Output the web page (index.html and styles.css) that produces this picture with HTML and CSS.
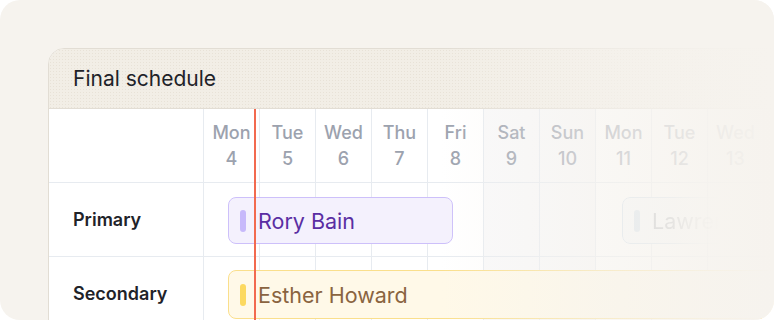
FILE: index.html
```html
<!DOCTYPE html>
<html lang="en">
  <head>
    <title>Final schedule</title>
    <link rel="stylesheet" href="styles.css">
  </head>

  <body>
    <div class="frame">
      <div class="card">
        <div class="card-head">Final schedule</div>
        <div class="table">
          <div class="row head-row">
            <div class="cells">
              <div class="cell label"></div>
              <div class="cell day"><span>Mon</span><span>4</span></div>
              <div class="cell day"><span>Tue</span><span>5</span></div>
              <div class="cell day"><span>Wed</span><span>6</span></div>
              <div class="cell day"><span>Thu</span><span>7</span></div>
              <div class="cell day"><span>Fri</span><span>8</span></div>
              <div class="cell day weekend"><span>Sat</span><span>9</span></div>
              <div class="cell day weekend"><span>Sun</span><span>10</span></div>
              <div class="cell day"><span>Mon</span><span>11</span></div>
              <div class="cell day"><span>Tue</span><span>12</span></div>
              <div class="cell day"><span>Wed</span><span>13</span></div>
              <div class="cell day"></div>
            </div>
          </div>

          <div class="row">
            <div class="cells">
              <div class="cell label">Primary</div>
              <div class="cell"></div>
              <div class="cell"></div>
              <div class="cell"></div>
              <div class="cell"></div>
              <div class="cell"></div>
              <div class="cell weekend"></div>
              <div class="cell weekend"></div>
              <div class="cell"></div>
              <div class="cell"></div>
              <div class="cell"></div>
              <div class="cell"></div>
            </div>
            <div class="event purple rory"><i></i>Rory Bain</div>
            <div class="event blue lawrence"><i></i>Lawrence</div>
          </div>

          <div class="row">
            <div class="cells">
              <div class="cell label">Secondary</div>
              <div class="cell"></div>
              <div class="cell"></div>
              <div class="cell"></div>
              <div class="cell"></div>
              <div class="cell"></div>
              <div class="cell weekend"></div>
              <div class="cell weekend"></div>
              <div class="cell"></div>
              <div class="cell"></div>
              <div class="cell"></div>
              <div class="cell"></div>
            </div>
            <div class="event yellow esther"><i></i>Esther Howard</div>
          </div>

          <div class="now-line"></div>
        </div>
      </div>
      <div class="fade"></div>
    </div>
  </body>
</html>
```

FILE: styles.css
```css
body {
  margin: 0;
  background-color: white;
  font-family: Inter, "Noto Sans", sans-serif;
}

.frame {
  position: relative;
  width: 774px;
  height: 320px;
  box-sizing: border-box;
  padding: 48px 0 0 48px;
  background-color: #f6f3ee;
  border-radius: 20px;
  overflow: hidden;
}

.card {
  width: 820px;
  background-color: white;
  border: 1px solid #e2ddd4;
  border-radius: 16px 16px 0 0;
  overflow: hidden;
}

.card-head {
  height: 59px;
  display: flex;
  align-items: center;
  padding-left: 24px;
  font-size: 21px;
  color: #1f2329;
  background-color: #f2eee6;
  background-image: radial-gradient(rgba(160, 140, 110, 0.12) 0.6px, transparent 0.8px);
  background-size: 3px 3px;
  border-bottom: 1px solid #e2ddd4;
}

.table {
  position: relative;
}

.row {
  display: grid;
  grid-template-columns: 155px repeat(11, 56px);
  height: 74px;
}

.cells {
  grid-column: 1 / -1;
  grid-row: 1;
  display: grid;
  grid-template-columns: 155px repeat(11, 56px);
}

.cell {
  border-right: 1px solid #e7ebf0;
  border-bottom: 1px solid #e7ebf0;
}

.weekend {
  background-color: #f9f9fa;
}

.label {
  display: flex;
  align-items: center;
  padding-left: 24px;
  font-size: 18px;
  font-weight: 600;
  color: #1f2329;
}

.day {
  display: flex;
  flex-direction: column;
  align-items: center;
  justify-content: center;
  font-size: 18px;
  font-weight: 500;
  line-height: 26px;
  color: #9ca2ae;
}

.event {
  grid-row: 1;
  z-index: 1;
  display: flex;
  align-items: center;
  gap: 12px;
  padding-left: 11px;
  border: 1px solid;
  border-radius: 8px;
  font-size: 21.5px;
  white-space: nowrap;
  overflow: hidden;
}

.event i {
  flex: none;
  width: 6px;
  height: 22px;
  border-radius: 3px;
}

.rory {
  grid-column: 2 / 7;
  margin: 14px 31px 13px 24px;
}

.lawrence {
  grid-column: 9 / 12;
  margin: 14px 0 13px 26px;
  -webkit-mask-image: linear-gradient(90deg, black 35%, transparent 70%);
  mask-image: linear-gradient(90deg, black 35%, transparent 70%);
}

.esther {
  grid-column: 2 / -1;
  margin: 13px 0 12px 24px;
}

.purple {
  background-color: #f4f1fd;
  border-color: #cdc0fa;
  color: #5a2ea3;
}
.purple i {
  background-color: #c7b9fb;
}

.yellow {
  background-color: #fff9e8;
  border-color: #fadf8c;
  color: #8a6440;
}
.yellow i {
  background-color: #fcd960;
}

.blue {
  background-color: #f7fafd;
  border-color: #cfdeec;
  color: #a3a8b0;
}
.blue i {
  background-color: #cfdeec;
}

.now-line {
  position: absolute;
  top: 0;
  bottom: 0;
  left: 205px;
  width: 2px;
  background-color: #f26a4f;
  z-index: 2;
}

.fade {
  position: absolute;
  inset: 0;
  pointer-events: none;
  z-index: 3;
  background: linear-gradient(90deg, rgba(246, 243, 238, 0) 57%, rgba(246, 243, 238, 0.6) 77%, rgba(246, 243, 238, 0.9) 92%, #f6f3ee 100%);
}
```
